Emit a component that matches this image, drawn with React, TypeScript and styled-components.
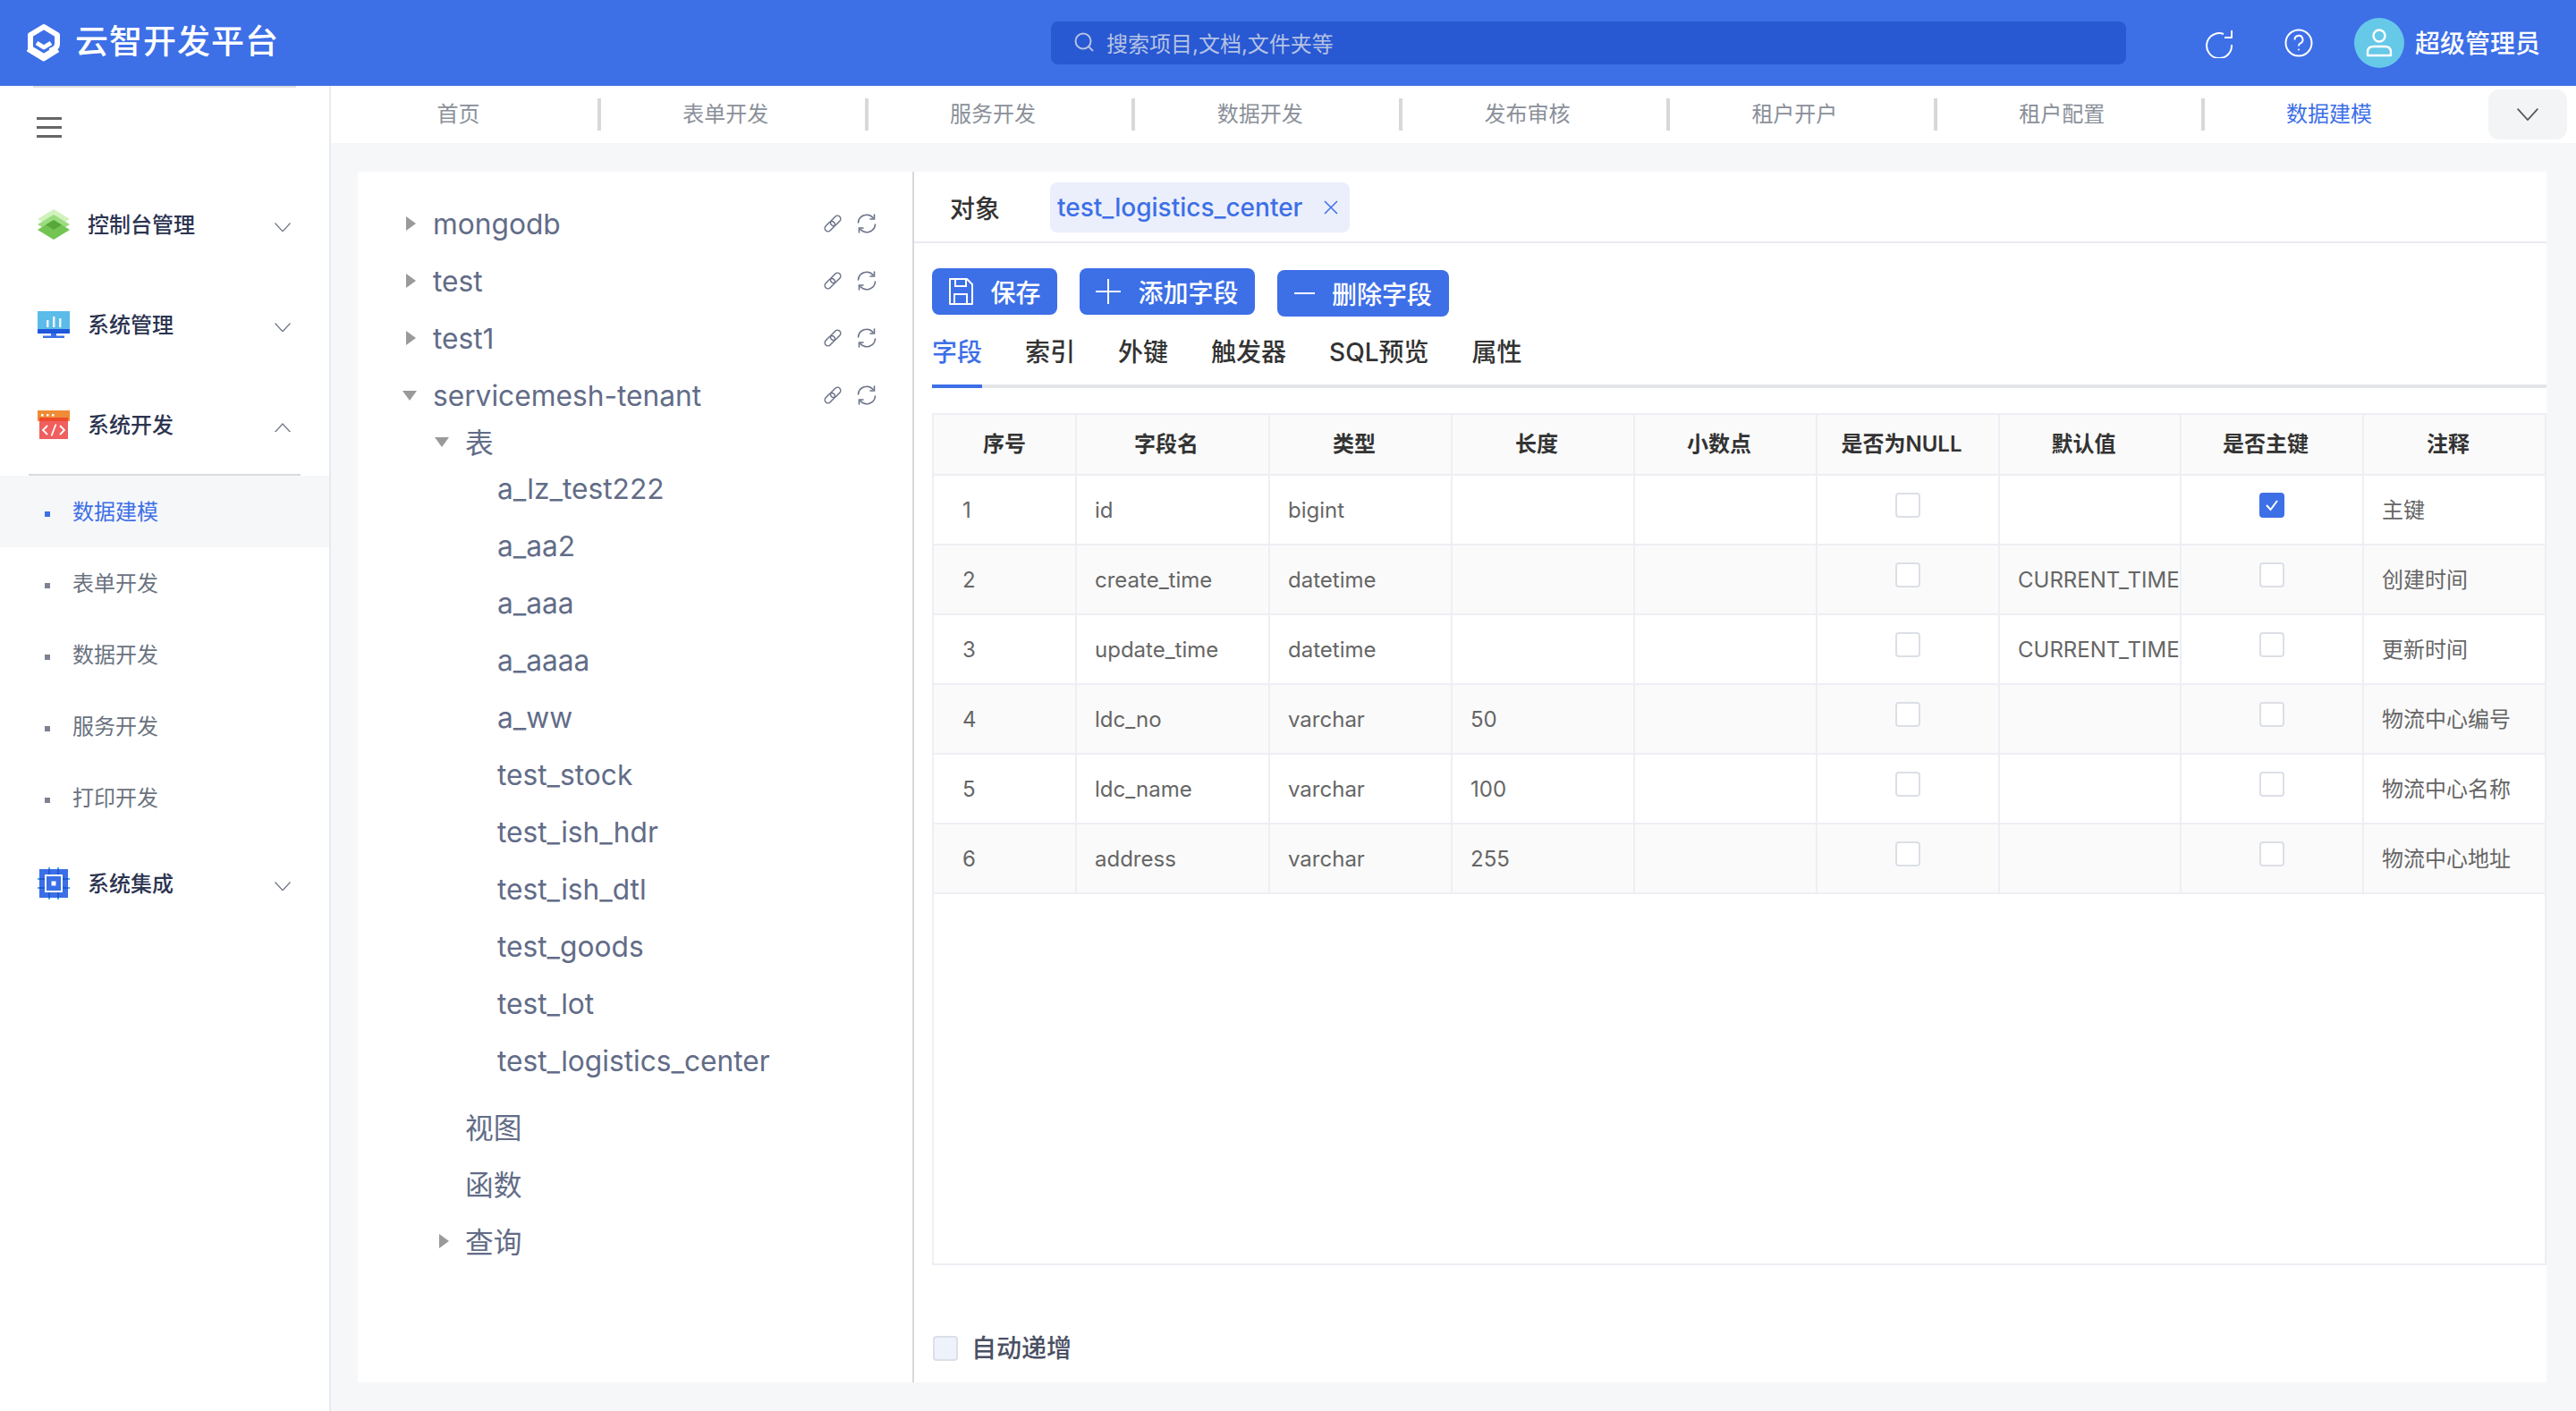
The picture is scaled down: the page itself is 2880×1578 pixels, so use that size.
import React from 'react'
import styled, { createGlobalStyle } from 'styled-components'

const blue = '#3d6fe7'
const line = '#eeeff4'

const GlobalStyle = createGlobalStyle`
  html, body {
    margin: 0;
    padding: 0;
    background: #fff;
  }
  body {
    font-family: Inter, "Noto Sans CJK SC", sans-serif;
  }
  * {
    box-sizing: border-box;
  }
`

const Page = styled.div`
  width: 2880px;
  height: 1578px;
  display: flex;
  flex-direction: column;
  overflow: hidden;
`

const Header = styled.header`
  height: 96px;
  flex: none;
  display: flex;
  align-items: center;
  background-color: ${blue};
  color: #fff;
  padding-left: 28px;
`

const LogoText = styled.div`
  margin-left: 14px;
  font-size: 37px;
  line-height: 44px;
  font-weight: 500;
  letter-spacing: 1px;
  width: 1091px;
  padding-bottom: 2px;
  white-space: nowrap;
`

const SearchBox = styled.div`
  width: 1202px;
  height: 48px;
  display: flex;
  align-items: center;
  padding: 0 0 2px 26px;
  gap: 14px;
  border-radius: 8px;
  background-color: #2858d2;
  color: #b4c2e4;
  font-size: 24px;
`

const HeaderIcons = styled.div`
  display: flex;
  align-items: center;
  margin-left: 88px;
  gap: 57px;
`

const Avatar = styled.div`
  width: 56px;
  height: 56px;
  margin-left: 46px;
  border-radius: 50%;
  background-color: #67c9e8;
  display: flex;
  align-items: center;
  justify-content: center;
`

const UserName = styled.div`
  margin-left: 12px;
  padding-bottom: 2px;
  font-size: 28px;
  font-weight: 500;
  white-space: nowrap;
`

const Body = styled.div`
  flex: 1;
  display: flex;
  min-height: 0;
`

const Sidebar = styled.aside`
  width: 370px;
  flex: none;
  background: #fff;
  border-right: 2px solid #e8eaef;
  position: relative;
`

const TopRule = styled.div`
  height: 2px;
  margin: 0 37px;
  background: #dcdcdc;
`

const MenuToggle = styled.div`
  height: 97px;
  padding: 33px 0 0 41px;
`

const Bars = styled.div`
  width: 28px;
  display: flex;
  flex-direction: column;
  gap: 7px;

  > span {
    height: 3px;
    background: #666;
  }
`

const MenuRow = styled.div`
  height: 112px;
  display: flex;
  align-items: center;
  padding-left: 42px;
  font-size: 24px;
  font-weight: 500;
  color: #2c3450;
`

const MenuIcon = styled.div`
  width: 36px;
  height: 36px;
  display: flex;
  align-items: center;
  justify-content: center;
`

const MenuLabel = styled.span`
  margin-left: 20px;
  margin-bottom: 3px;
  flex: 1;
`

const MenuChevron = styled.div`
  width: 18px;
  margin-right: 43px;
  display: flex;
  padding-top: 6px;
`

const SubRule = styled.div`
  height: 2px;
  margin: -1px 32px 0;
  background: #dcdcdc;
`

const SubItem = styled.div<{ $active?: boolean }>`
  height: 80px;
  display: flex;
  align-items: center;
  padding: 0 0 3px 50px;
  gap: 25px;
  font-size: 24px;
  color: ${({ $active }) => ($active ? blue : '#6b7280')};
  background: ${({ $active }) => ($active ? '#f6f7f9' : 'transparent')};

  &:first-of-type {
    margin-top: -1px;
  }

  &::before {
    content: '';
    width: 6px;
    height: 6px;
    margin-top: 8px;
    background: ${({ $active }) => ($active ? blue : '#7c8290')};
  }
`

const Main = styled.main`
  flex: 1;
  min-width: 0;
  display: flex;
  flex-direction: column;
  background: #f6f7f9;
`

const TabBar = styled.nav`
  height: 64px;
  flex: none;
  display: flex;
  align-items: center;
  padding-left: 3px;
  background: #fff;
`

const NavTab = styled.div<{ $active?: boolean; $last?: boolean }>`
  width: 298.8px;
  height: 36px;
  display: flex;
  align-items: center;
  justify-content: center;
  padding: 0 16px 6px 0;
  font-size: 24px;
  color: ${({ $active }) => ($active ? blue : '#8a8f99')};
  border-right: 4px solid ${({ $last }) => ($last ? 'transparent' : '#d8d8d8')};
`

const MoreButton = styled.div`
  width: 88px;
  height: 56px;
  margin-left: 19px;
  border-radius: 12px;
  background: #f3f4f6;
  display: flex;
  align-items: center;
  justify-content: center;
`

const Content = styled.div`
  flex: 1;
  min-height: 0;
  display: flex;
  padding: 32px 33px 32px 30px;
`

const TreePanel = styled.section`
  width: 620px;
  flex: none;
  background: #fff;
  padding-top: 26px;
`

const TreeRow = styled.div<{ $level: number; $tall?: boolean }>`
  height: ${({ $tall }) => ($tall ? '40px' : '64px')};
  display: flex;
  align-items: center;
  padding-left: ${({ $level }) => 84 + $level * 36}px;
  padding-bottom: ${({ $level }) => ($level === 1 ? '2px' : '0')};
  position: relative;
  font-size: 31.7px;
  color: #626c87;
  white-space: nowrap;
`

const CaretRight = styled.span`
  position: absolute;
  left: ${(props: { $x: number }) => props.$x}px;
  top: 50%;
  margin-top: -8px;
  width: 0;
  height: 0;
  border-top: 8px solid transparent;
  border-bottom: 8px solid transparent;
  border-left: 11px solid #9a9a9a;
`

const CaretDown = styled.span`
  position: absolute;
  left: ${(props: { $x: number }) => props.$x}px;
  top: 50%;
  margin-top: -5px;
  width: 0;
  height: 0;
  border-left: 8.5px solid transparent;
  border-right: 8.5px solid transparent;
  border-top: 11px solid #9a9a9a;
`

const RowActions = styled.div`
  margin-left: auto;
  margin-right: 40px;
  display: flex;
  gap: 16px;
  color: #6b7289;
`

const TreeGap = styled.div`
  height: 10px;
`

const EditorPanel = styled.section`
  flex: 1;
  min-width: 0;
  background: #fff;
  border-left: 2px solid #d9d9d9;
  display: flex;
  flex-direction: column;
`

const ObjectBar = styled.div`
  height: 80px;
  flex: none;
  display: flex;
  align-items: center;
  padding-left: 40px;
  padding-top: 2px;
  border-bottom: 2px solid #e9eaef;
`

const ObjectLabel = styled.span`
  font-size: 28px;
  font-weight: 500;
  color: #333;
  width: 112px;
`

const Chip = styled.div`
  height: 56px;
  width: 335px;
  display: flex;
  align-items: center;
  padding-left: 8px;
  border-radius: 8px;
  background: #ebeffc;
  color: ${blue};
  font-size: 28px;
  font-weight: 500;
`

const ChipClose = styled.span`
  display: flex;
  margin-left: 24px;
`

const Editor = styled.div`
  flex: 1;
  min-height: 0;
  padding: 28px 0 0 20px;
  display: flex;
  flex-direction: column;
`

const Actions = styled.div`
  display: flex;
  gap: 25px;
  align-items: flex-start;
`

const ActionButton = styled.button<{ $width: number; $drop?: boolean }>`
  width: ${({ $width }) => $width}px;
  height: 52px;
  margin-top: ${({ $drop }) => ($drop ? '2px' : '0')};
  display: flex;
  align-items: center;
  justify-content: center;
  gap: 19px;
  padding: 0;
  border: none;
  border-radius: 8px;
  background: ${blue};
  color: #fff;
  font-family: inherit;
  font-size: 28px;
  font-weight: 500;
`

const FieldTabs = styled.div`
  display: flex;
  gap: 48px;
  margin-top: 16px;
  border-bottom: 4px solid #e4e5ea;
`

const FieldTab = styled.div<{ $active?: boolean }>`
  height: 64px;
  line-height: 48px;
  margin-bottom: -4px;
  font-size: 28px;
  font-weight: 500;
  white-space: nowrap;
  color: ${({ $active }) => ($active ? blue : '#333')};
  border-bottom: 4px solid ${({ $active }) => ($active ? blue : 'transparent')};
`

const TableBox = styled.div`
  height: 953px;
  margin-top: 28px;
  border: 2px solid ${line};
  flex: none;
`

const Table = styled.table`
  width: 100%;
  table-layout: fixed;
  border-spacing: 0;
`

const Th = styled.th`
  height: 68px;
  padding: 0 14px 5px 0;
  font-size: 24px;
  font-weight: 600;
  text-align: center;
  color: #333;
  background: #fafafa;
  border-right: 2px solid ${line};
  border-bottom: 2px solid ${line};

  &:first-child {
    padding-right: 0;
  }

  &:last-child {
    border-right: none;
  }
`

const Tr = styled.tr`
  &:nth-child(even) td {
    background: #fafafa;
  }
`

const Td = styled.td`
  height: 78px;
  padding: 0 0 0 20px;
  font-size: 24px;
  color: #666;
  white-space: nowrap;
  overflow: hidden;
  border-right: 2px solid ${line};
  border-bottom: 2px solid ${line};

  &:first-child {
    padding-left: 32px;
  }

  &:last-child {
    padding-bottom: 3px;
    border-right: none;
  }
`

const CheckCell = styled(Td)`
  padding: 0;

  &:first-child {
    padding: 0;
  }
`

const Check = styled.span<{ $on?: boolean }>`
  display: flex;
  align-items: center;
  justify-content: center;
  width: 28px;
  height: 28px;
  margin: -10px auto 0;
  border-radius: 4px;
  background: ${({ $on }) => ($on ? blue : '#fff')};
  border: 2px solid ${({ $on }) => ($on ? blue : '#dcdfe6')};
`

const Footer = styled.div`
  flex: 1;
  display: flex;
  align-items: center;
  gap: 15px;
  padding: 50px 0 0 1px;
  font-size: 28px;
  font-weight: 500;
  color: #4a5064;
`

const FooterCheck = styled.span`
  width: 28px;
  height: 28px;
  margin-top: 4px;
  border-radius: 4px;
  background: #eef3fb;
  border: 2px solid #dcdfe6;
`

const LogoIcon = () => (
  <svg width="42" height="46" viewBox="0 0 42 46" fill="none" stroke="#fff" strokeWidth="6" strokeLinejoin="round">
    <path d="M34 30 L21 38 L6 29 V14 L21 5 L36 14 V24 Q36 28 32 30 L28 32" />
    <path d="M3 30 L21 41 L37 31" strokeWidth="5" />
    <path d="M13 23 L21 28 L29 23" strokeWidth="5" />
  </svg>
)

const SearchIcon = () => (
  <svg width="22" height="22" viewBox="0 0 22 22" fill="none" stroke="#b4c2e4" strokeWidth="2">
    <circle cx="10" cy="10" r="8.5" />
    <path d="M16 16 L21 21" />
  </svg>
)

const RefreshIcon = () => (
  <svg width="32" height="34" viewBox="0 0 32 34" fill="none" stroke="#fff" strokeWidth="2">
    <path d="M21 7 A14 14 0 1 0 30 19" />
    <path d="M30 3 V11 H22" strokeLinejoin="round" />
  </svg>
)

const HelpIcon = () => (
  <svg width="32" height="32" viewBox="0 0 32 32" fill="none" stroke="#fff" strokeWidth="2">
    <circle cx="16" cy="16" r="14.5" />
    <path d="M11.5 12.5 A4.5 4.5 0 1 1 17.5 16.6 Q16 17.3 16 19.5" />
    <circle cx="16" cy="23.5" r="1" fill="#fff" stroke="none" />
  </svg>
)

const UserIcon = () => (
  <svg width="30" height="32" viewBox="0 0 30 32" fill="none" stroke="#fff" strokeWidth="2.4">
    <circle cx="15" cy="8" r="6.5" />
    <path d="M2 30 V26 Q2 20 9 20 H21 Q28 20 28 26 V30 Z" strokeLinejoin="round" />
  </svg>
)

const Chevron = ({ up, size = 18, color = '#737a8c' }: { up?: boolean; size?: number; color?: string }) => (
  <svg width={size} height={size * 0.6} viewBox="0 0 18 10.8" fill="none" stroke={color} strokeWidth="1.3">
    <path d={up ? 'M0.5 10.3 L9 1 L17.5 10.3' : 'M0.5 0.5 L9 9.8 L17.5 0.5'} />
  </svg>
)

const LayersIcon = () => (
  <svg width="36" height="34" viewBox="0 0 36 34">
    <path d="M18 0 L36 11 L18 22 L0 11 Z" fill="#d0f2bd" />
    <path d="M18 6 L36 17 L18 28 L0 17 Z" fill="#9bdc80" />
    <path d="M18 12 L36 23 L18 34 L0 23 Z" fill="#72c552" />
    <path d="M18 12 L27 17.5 L18 23 L9 17.5 Z" fill="#57a83a" />
  </svg>
)

const MonitorIcon = () => (
  <svg width="36" height="30" viewBox="0 0 36 30">
    <rect width="36" height="20" fill="#5bbbe9" />
    <rect y="20" width="36" height="5" fill="#1f57dc" />
    <rect x="15" y="25" width="6" height="3" fill="#3d6fe7" />
    <rect x="6" y="27.5" width="24" height="2.5" fill="#3d6fe7" />
    <rect x="10" y="10" width="2.5" height="8" fill="#e8f5fc" />
    <rect x="17" y="6" width="2.5" height="12" fill="#e8f5fc" />
    <rect x="24" y="8" width="2.5" height="10" fill="#e8f5fc" />
  </svg>
)

const CodeIcon = () => (
  <svg width="36" height="32" viewBox="0 0 36 32">
    <rect width="36" height="12" fill="#f08c36" />
    <rect x="2" y="8" width="32" height="24" fill="#f05f5e" />
    <rect x="2" y="8" width="32" height="4" fill="#ee4a2a" />
    <rect x="4" y="4" width="2.5" height="2.5" fill="#fff" />
    <rect x="10" y="4" width="2.5" height="2.5" fill="#fff" />
    <rect x="16" y="4" width="2.5" height="2.5" fill="#fff" />
    <path d="M11 17 L6 22 L11 27 M25 17 L30 22 L25 27 M20.5 15.5 L15.5 28.5" fill="none" stroke="#fff" strokeWidth="1.8" />
  </svg>
)

const ChipIcon = () => (
  <svg width="36" height="36" viewBox="0 0 36 36">
    <path d="M0 13 H36 M0 23 H36 M13 0 V36 M23 0 V36" stroke="#45aee8" strokeWidth="2" />
    <rect x="2" y="2" width="32" height="32" fill="#3a6fe8" />
    <path d="M2 13 H34 M2 23 H34 M13 2 V34 M23 2 V34" stroke="#2456cf" strokeWidth="2" />
    <rect x="9" y="9" width="18" height="18" fill="#3a6fe8" stroke="#fff" strokeWidth="2" />
    <rect x="15.5" y="15.5" width="5" height="5" fill="#fff" />
  </svg>
)

const LinkIcon = () => (
  <svg width="22" height="24" viewBox="0 0 22 24" fill="none" stroke="currentColor" strokeWidth="1.5">
    <g transform="rotate(-45 11 12)">
      <rect x="0" y="8.5" width="13" height="7" rx="3.5" />
      <rect x="9" y="8.5" width="13" height="7" rx="3.5" />
    </g>
  </svg>
)

const SyncIcon = () => (
  <svg width="22" height="24" viewBox="0 0 22 24" fill="none" stroke="currentColor" strokeWidth="1.6" strokeLinecap="round">
    <path d="M1.5 11 A9.5 9.5 0 0 1 18 5.5" />
    <path d="M19.5 2 V7 H15" />
    <path d="M20.5 13 A9.5 9.5 0 0 1 4 18.5" />
    <path d="M2.5 22 V17 H7" />
  </svg>
)

const SaveIcon = () => (
  <svg width="28" height="30" viewBox="0 0 28 30" fill="none" stroke="#fff" strokeWidth="2">
    <path d="M2 1 H21 L27 7 V29 H2 Z" strokeLinejoin="round" />
    <path d="M8 1 V9 H20 V1 M7 29 V18 H21 V29" />
  </svg>
)

const PlusIcon = () => (
  <svg width="28" height="28" viewBox="0 0 28 28" stroke="#fff" strokeWidth="2">
    <path d="M0 14 H28 M14 0 V28" />
  </svg>
)

const MinusIcon = () => (
  <svg width="23" height="4" viewBox="0 0 23 4" stroke="#fff" strokeWidth="2">
    <path d="M0 2 H23" />
  </svg>
)

const CloseIcon = () => (
  <svg width="16" height="16" viewBox="0 0 16 16" stroke={blue} strokeWidth="1.5">
    <path d="M1 1 L15 15 M15 1 L1 15" />
  </svg>
)

const CheckMark = () => (
  <svg width="16" height="14" viewBox="0 0 16 14" fill="none" stroke="#fff" strokeWidth="2">
    <path d="M2 7 L6.5 12 L14 2" />
  </svg>
)

const navTabs = ['首页', '表单开发', '服务开发', '数据开发', '发布审核', '租户开户', '租户配置', '数据建模']
const subMenus = ['数据建模', '表单开发', '数据开发', '服务开发', '打印开发']
const databases = ['mongodb', 'test', 'test1']
const tables = [
  'a_lz_test222',
  'a_aa2',
  'a_aaa',
  'a_aaaa',
  'a_ww',
  'test_stock',
  'test_ish_hdr',
  'test_ish_dtl',
  'test_goods',
  'test_lot',
  'test_logistics_center',
]
const fieldTabs = ['字段', '索引', '外键', '触发器', 'SQL预览', '属性']
const columns = ['序号', '字段名', '类型', '长度', '小数点', '是否为NULL', '默认值', '是否主键', '注释']
const columnWidths = [160, 216, 204, 204, 204, 204, 203, 204, 202]
const rows = [
  { no: 1, name: 'id', type: 'bigint', len: '', def: '', key: true, note: '主键' },
  { no: 2, name: 'create_time', type: 'datetime', len: '', def: 'CURRENT_TIME', key: false, note: '创建时间' },
  { no: 3, name: 'update_time', type: 'datetime', len: '', def: 'CURRENT_TIME', key: false, note: '更新时间' },
  { no: 4, name: 'ldc_no', type: 'varchar', len: '50', def: '', key: false, note: '物流中心编号' },
  { no: 5, name: 'ldc_name', type: 'varchar', len: '100', def: '', key: false, note: '物流中心名称' },
  { no: 6, name: 'address', type: 'varchar', len: '255', def: '', key: false, note: '物流中心地址' },
]

const App = () => {
  return (
    <Page>
      <GlobalStyle />
      <Header>
        <LogoIcon />
        <LogoText>云智开发平台</LogoText>
        <SearchBox>
          <SearchIcon />
          搜索项目,文档,文件夹等
        </SearchBox>
        <HeaderIcons>
          <RefreshIcon />
          <HelpIcon />
        </HeaderIcons>
        <Avatar>
          <UserIcon />
        </Avatar>
        <UserName>超级管理员</UserName>
      </Header>
      <Body>
        <Sidebar>
          <TopRule />
          <MenuToggle>
            <Bars>
              <span />
              <span />
              <span />
            </Bars>
          </MenuToggle>
          <MenuRow>
            <MenuIcon><LayersIcon /></MenuIcon>
            <MenuLabel>控制台管理</MenuLabel>
            <MenuChevron><Chevron /></MenuChevron>
          </MenuRow>
          <MenuRow>
            <MenuIcon><MonitorIcon /></MenuIcon>
            <MenuLabel>系统管理</MenuLabel>
            <MenuChevron><Chevron /></MenuChevron>
          </MenuRow>
          <MenuRow>
            <MenuIcon><CodeIcon /></MenuIcon>
            <MenuLabel>系统开发</MenuLabel>
            <MenuChevron><Chevron up /></MenuChevron>
          </MenuRow>
          <SubRule />
          {subMenus.map((name, i) => (
            <SubItem key={name} $active={i === 0}>{name}</SubItem>
          ))}
          <MenuRow>
            <MenuIcon><ChipIcon /></MenuIcon>
            <MenuLabel>系统集成</MenuLabel>
            <MenuChevron><Chevron /></MenuChevron>
          </MenuRow>
        </Sidebar>
        <Main>
          <TabBar>
            {navTabs.map((name, i) => (
              <NavTab key={name} $active={i === navTabs.length - 1} $last={i === navTabs.length - 1}>{name}</NavTab>
            ))}
            <MoreButton>
              <Chevron size={24} color="#555" />
            </MoreButton>
          </TabBar>
          <Content>
            <TreePanel>
              {databases.map((name) => (
                <TreeRow key={name} $level={0}>
                  <CaretRight $x={54} />
                  {name}
                  <RowActions>
                    <LinkIcon />
                    <SyncIcon />
                  </RowActions>
                </TreeRow>
              ))}
              <TreeRow $level={0}>
                <CaretDown $x={50} />
                servicemesh-tenant
                <RowActions>
                  <LinkIcon />
                  <SyncIcon />
                </RowActions>
              </TreeRow>
              <TreeRow $level={1} $tall>
                <CaretDown $x={86} />
                表
              </TreeRow>
              {tables.map((name) => (
                <TreeRow key={name} $level={2}>{name}</TreeRow>
              ))}
              <TreeGap />
              <TreeRow $level={1}>视图</TreeRow>
              <TreeRow $level={1}>函数</TreeRow>
              <TreeRow $level={1}>
                <CaretRight $x={91} />
                查询
              </TreeRow>
            </TreePanel>
            <EditorPanel>
              <ObjectBar>
                <ObjectLabel>对象</ObjectLabel>
                <Chip>
                  test_logistics_center
                  <ChipClose><CloseIcon /></ChipClose>
                </Chip>
              </ObjectBar>
              <Editor>
                <Actions>
                  <ActionButton $width={140}><SaveIcon />保存</ActionButton>
                  <ActionButton $width={196}><PlusIcon />添加字段</ActionButton>
                  <ActionButton $width={192} $drop><MinusIcon />删除字段</ActionButton>
                </Actions>
                <FieldTabs>
                  {fieldTabs.map((name, i) => (
                    <FieldTab key={name} $active={i === 0}>{name}</FieldTab>
                  ))}
                </FieldTabs>
                <TableBox>
                  <Table>
                    <colgroup>
                      {columnWidths.map((w, i) => (
                        <col key={i} width={w} />
                      ))}
                    </colgroup>
                    <thead>
                      <tr>
                        {columns.map((name) => (
                          <Th key={name}>{name}</Th>
                        ))}
                      </tr>
                    </thead>
                    <tbody>
                      {rows.map((row) => (
                        <Tr key={row.no}>
                          <Td>{row.no}</Td>
                          <Td>{row.name}</Td>
                          <Td>{row.type}</Td>
                          <Td>{row.len}</Td>
                          <Td />
                          <CheckCell><Check /></CheckCell>
                          <Td>{row.def}</Td>
                          <CheckCell>
                            <Check $on={row.key}>{row.key && <CheckMark />}</Check>
                          </CheckCell>
                          <Td>{row.note}</Td>
                        </Tr>
                      ))}
                    </tbody>
                  </Table>
                </TableBox>
                <Footer>
                  <FooterCheck />
                  自动递增
                </Footer>
              </Editor>
            </EditorPanel>
          </Content>
        </Main>
      </Body>
    </Page>
  )
}

export default App
